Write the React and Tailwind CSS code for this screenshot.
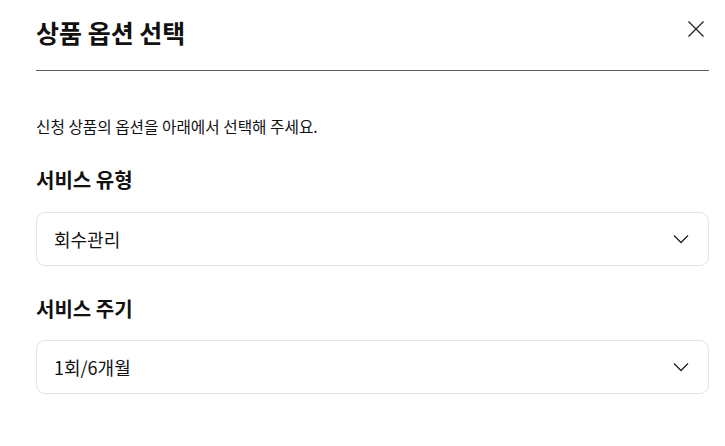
import { useState } from "react";

const font = { fontFamily: '"Noto Sans CJK KR", "Noto Sans", sans-serif' };

function Chevron() {
  return (
    <svg width="16" height="10" viewBox="0 0 16 10" fill="none">
      <path d="M1 1.5L8 8.5L15 1.5" stroke="#222" strokeWidth="1.3" />
    </svg>
  );
}

function SelectBox({ value }) {
  return (
    <button
      type="button"
      className="w-full h-[54px] flex items-center justify-between pl-[17px] pr-[19px] border border-[#e3e3e3] rounded-[9px] bg-white text-left"
    >
      <span className="text-[18px] leading-[24px] text-[#111]">{value}</span>
      <Chevron />
    </button>
  );
}

export default function App() {
  const [type] = useState("회수관리");
  const [cycle] = useState("1회/6개월");

  return (
    <div className="w-[725px] h-[446px] bg-white overflow-hidden" style={font}>
      <div className="ml-[36px] w-[673px]">
        <div className="h-[71px] flex justify-between border-b border-[#5c5c5c]">
          <h2 className="mt-[17px] text-[25px] leading-[30px] font-bold text-[#111]">
            상품 옵션 선택
          </h2>
          <button type="button" className="mt-[21px] mr-[5px] w-[16px] h-[16px]">
            <svg width="16" height="16" viewBox="0 0 16 16" fill="none">
              <path d="M0.5 0.5L15.5 15.5M15.5 0.5L0.5 15.5" stroke="#222" strokeWidth="1.3" />
            </svg>
          </button>
        </div>

        <p className="mt-[46px] text-[15.7px] leading-[20px] text-[#111]">
          신청 상품의 옵션을 아래에서 선택해 주세요.
        </p>

        <h3 className="mt-[30px] text-[20px] leading-[26px] font-bold text-[#111]">서비스 유형</h3>
        <div className="mt-[19px]">
          <SelectBox value={type} />
        </div>

        <h3 className="mt-[30px] text-[20px] leading-[26px] font-bold text-[#111]">서비스 주기</h3>
        <div className="mt-[18px]">
          <SelectBox value={cycle} />
        </div>
      </div>
    </div>
  );
}
